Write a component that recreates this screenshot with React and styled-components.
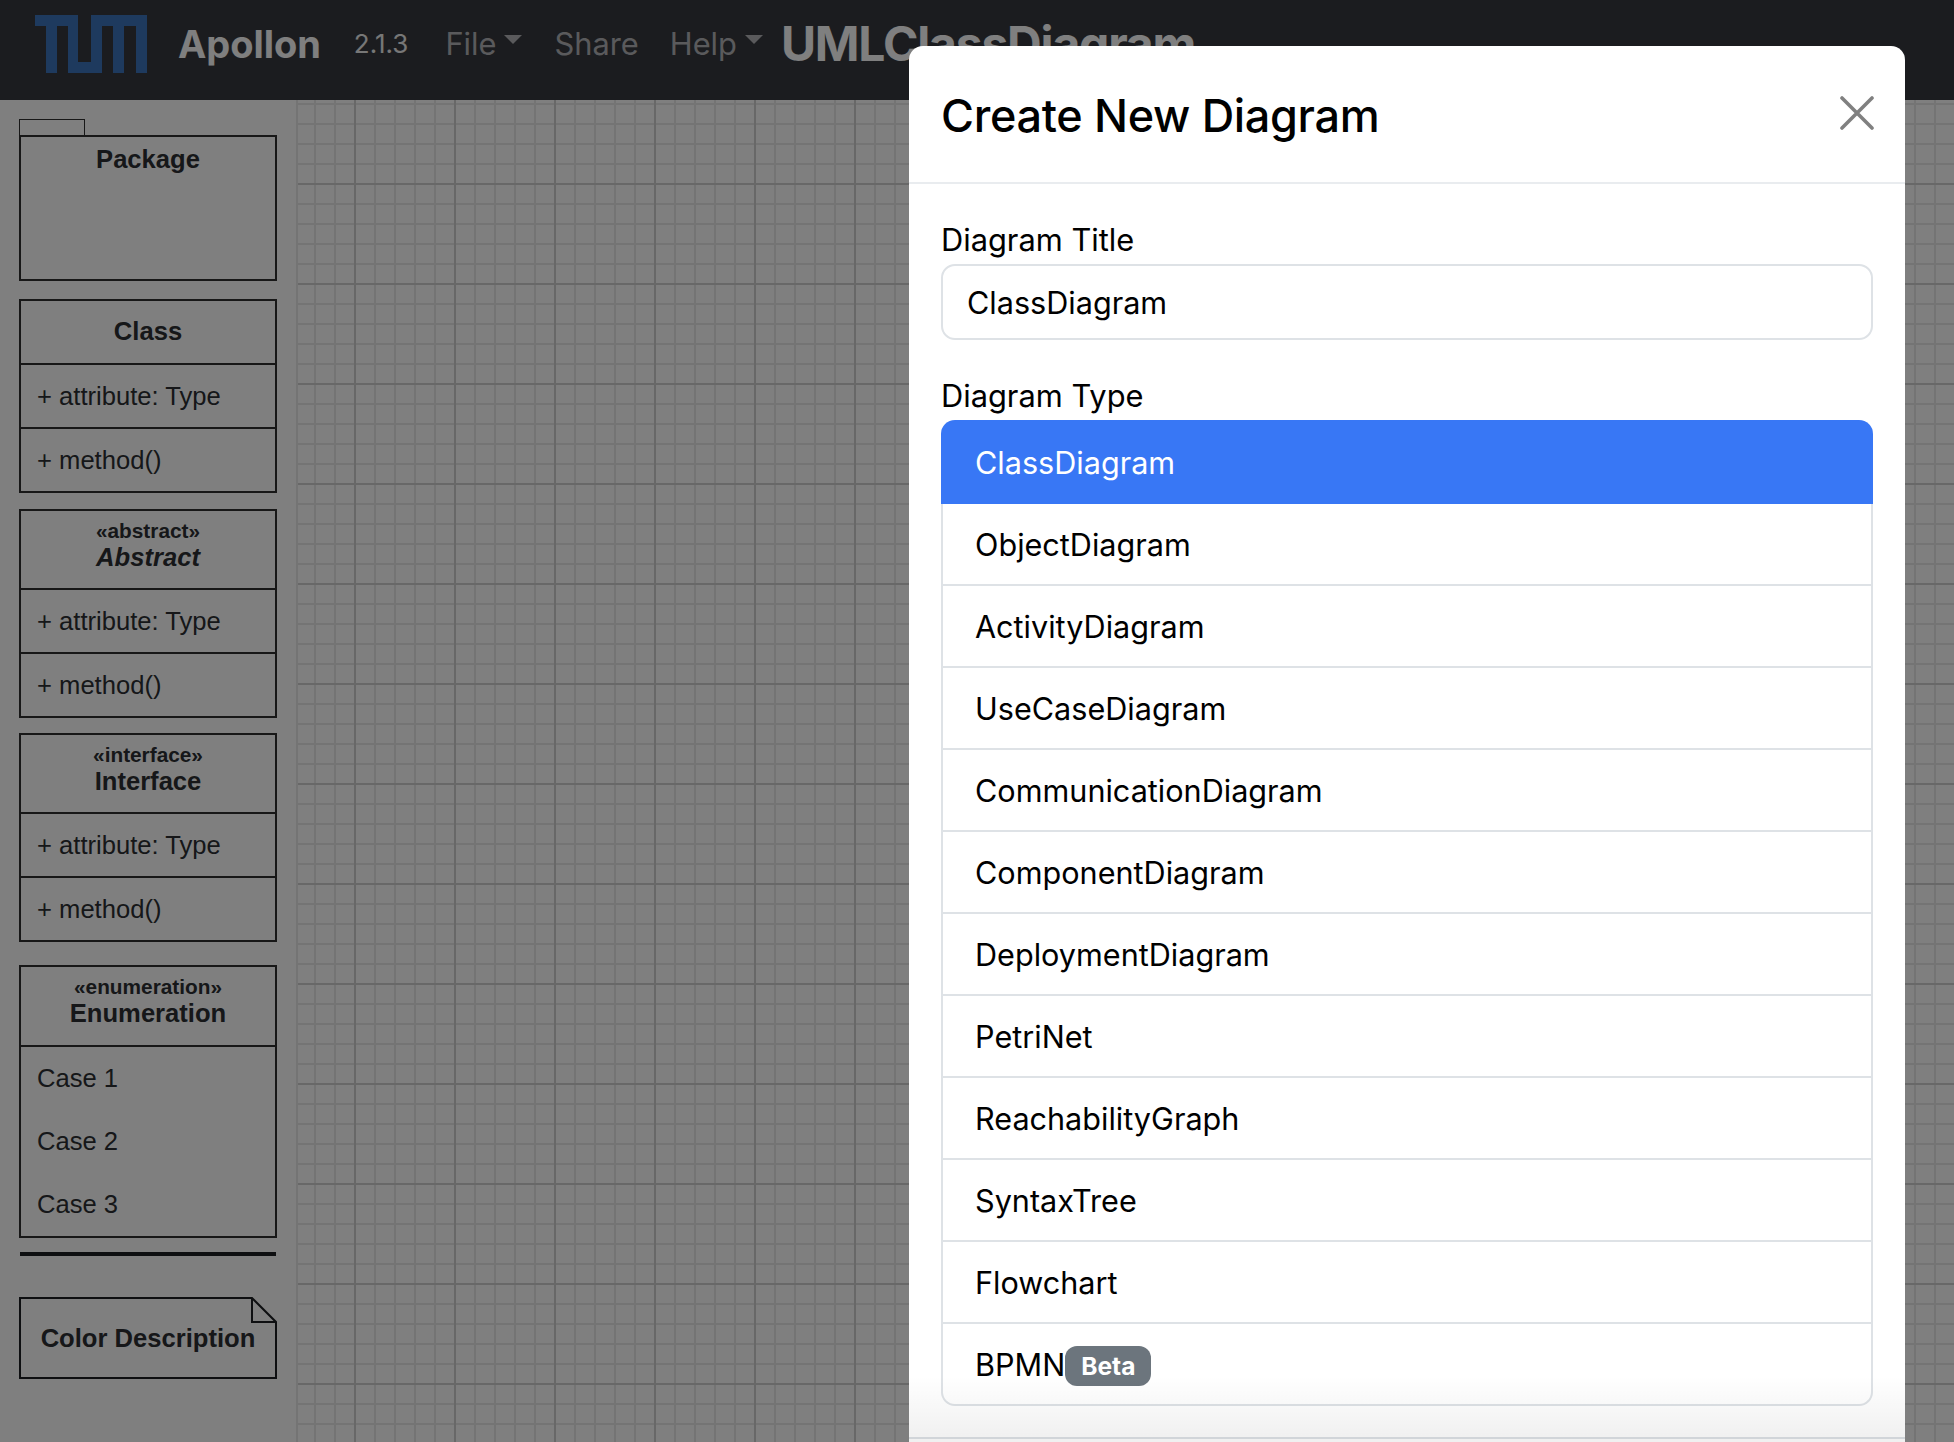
import React from 'react'
import styled, { createGlobalStyle } from 'styled-components'

const GlobalStyle = createGlobalStyle`
  * { box-sizing: border-box; }
  html, body { margin: 0; padding: 0; background: #fff; }
  body { font-family: Inter, "Liberation Sans", sans-serif; overflow: hidden; }
`

const Page = styled.div`
  position: relative;
  width: 1954px;
  height: 1442px;
  overflow: hidden;
  background: #fff;
`

const Navbar = styled.nav`
  height: 100px;
  background: #36393f;
  display: flex;
  align-items: center;
  padding: 0 0 13px 35px;
  white-space: nowrap;
`

const Logo = styled.svg`
  width: 112px;
  height: 58px;
  margin-bottom: -1px;
  flex: none;
`

const Brand = styled.span`
  margin-left: 31px;
  font-size: 38px;
  font-weight: 700;
  letter-spacing: -0.05px;
  color: #fff;
`

const Version = styled.span`
  margin-left: 33px;
  font-size: 26px;
  color: #eee;
`

const NavLink = styled.span`
  margin-left: ${p => p.$ml}px;
  font-size: 30.8px;
  color: #b4b5b8;
  display: inline-flex;
  align-items: center;
`

const Caret = styled.i`
  display: inline-block;
  margin-left: 8px;
  margin-top: -8px;
  border-top: 9px solid #b4b5b8;
  border-left: 9px solid transparent;
  border-right: 9px solid transparent;
`

const DiagramName = styled.span`
  margin-left: 18px;
  font-size: 48px;
  font-weight: 700;
  letter-spacing: -1.2px;
  color: #fff;
`

const Workspace = styled.div`
  display: flex;
  height: 1342px;
`

const Sidebar = styled.aside`
  width: 296px;
  flex: none;
  padding: 19px 0 0 19px;
  display: flex;
  flex-direction: column;
  font-family: "Liberation Sans", Arial, sans-serif;
  color: #2c2f33;
`

const Canvas = styled.main`
  flex: 1;
  border-left: 2px solid #e8e8e8;
  background-image:
    linear-gradient(to right, #d0d0d0 2px, transparent 2px),
    linear-gradient(to bottom, #d0d0d0 2px, transparent 2px),
    linear-gradient(to right, #e8e8e8 2px, transparent 2px),
    linear-gradient(to bottom, #e8e8e8 2px, transparent 2px);
  background-size: 100px 100%, 100% 100px, 20px 100%, 100% 20px;
  background-position: 56px 2px, 0 83px, 16px 2px, 0 3px;
  background-repeat: repeat;
`

const PackageTab = styled.div`
  width: 66px;
  height: 16px;
  border: 1.5px solid #2e2e2e;
  border-bottom: 0;
`

const PackageBody = styled.div`
  width: 258px;
  height: 146px;
  border: 2px solid #2e2e2e;
  padding-top: 6px;
  text-align: center;
  font-size: 25.6px;
  font-weight: 700;
  line-height: 32px;
`

const UmlBox = styled.section`
  width: 258px;
  margin-top: ${p => p.$mt}px;
  border: 2px solid #2e2e2e;
  display: flex;
  flex-direction: column;
`

const UmlHead = styled.header`
  height: ${p => p.$h}px;
  flex: none;
  display: flex;
  flex-direction: column;
  align-items: center;
  justify-content: ${p => (p.$stereo ? 'flex-start' : 'center')};
  padding: ${p => (p.$stereo ? '7px 0 0' : '0 0 3px')};
  border-bottom: 2px solid #2e2e2e;
`

const Stereotype = styled.span`
  font-size: 20.8px;
  font-weight: 700;
  line-height: 26px;
`

const UmlName = styled.span`
  font-size: 25.6px;
  font-weight: 700;
  font-style: ${p => (p.$italic ? 'italic' : 'normal')};
  line-height: 26px;
`

const UmlRow = styled.div`
  height: ${p => p.$h || 62}px;
  flex: none;
  display: flex;
  align-items: center;
  padding-left: 16px;
  font-size: 25.6px;
  border-bottom: ${p => (p.$divider ? '2px solid #2e2e2e' : '0')};
`

const Separator = styled.hr`
  width: 256px;
  height: 4px;
  margin: 14px 0 0 1px;
  border: 0;
  background: #1c1e22;
`

const NoteBox = styled.div`
  position: relative;
  width: 258px;
  height: 82px;
  margin-top: 41px;
  display: flex;
  align-items: center;
  justify-content: center;
  font-size: 25.6px;
  font-weight: 700;
`

const NoteOutline = styled.svg`
  position: absolute;
  inset: 0;
  width: 100%;
  height: 100%;
`

const NoteLabel = styled.span`
  position: relative;
`

const Backdrop = styled.div`
  position: absolute;
  inset: 0;
  background: rgba(0, 0, 0, 0.5);
  padding: 46px 0 0 909px;
`

const Modal = styled.div`
  position: relative;
  width: 996px;
  height: 1420px;
  background: #fff;
  border-radius: 14px 14px 0 0;
  color: #000;
  display: flex;
  flex-direction: column;

  &::after {
    content: '';
    position: absolute;
    left: 0;
    right: 0;
    top: 1330px;
    height: 90px;
    background: linear-gradient(to bottom, rgba(0, 0, 0, 0), rgba(0, 0, 0, 0.06) 70%);
    pointer-events: none;
  }
`

const ModalHeader = styled.div`
  height: 138px;
  flex: none;
  display: flex;
  align-items: center;
  justify-content: space-between;
  padding: 0 32px;
  border-bottom: 2px solid #e9ecef;
`

const ModalTitle = styled.h5`
  margin: 3px 0 0;
  font-size: 45px;
  font-weight: 550;
  letter-spacing: -0.33px;
  line-height: 1.2;
`

const CloseIcon = styled.svg`
  width: 34px;
  height: 34px;
  margin: 0 -1px 2px 0;
`

const ModalBody = styled.div`
  padding: 36px 32px 0;
  flex: none;
`

const FieldLabel = styled.label`
  display: block;
  height: 44px;
  font-size: 30.8px;
  line-height: 40px;
  margin-top: ${p => p.$mt || 0}px;
`

const TitleInput = styled.div`
  height: 76px;
  border: 2px solid #dee2e6;
  border-radius: 14px;
  display: flex;
  align-items: center;
  padding-left: 24px;
  font-size: 30.6px;
`

const TypeList = styled.ul`
  list-style: none;
  margin: 0;
  padding: 0;
  border-radius: 14px;
`

const TypeItem = styled.li`
  height: ${p => (p.$active ? 84 : 82)}px;
  display: flex;
  align-items: center;
  padding-left: ${p => (p.$active ? 34 : 32)}px;
  font-size: 30.6px;
  background: ${p => (p.$active ? '#3877f5' : '#fff')};
  color: ${p => (p.$active ? '#fff' : '#000')};
  border-style: solid;
  border-color: #dee2e6;
  border-width: ${p => (p.$active ? '0' : '0 2px 2px')};
  border-radius: ${p => (p.$active ? '14px 14px 0 0' : p.$last ? '0 0 14px 14px' : '0')};
`

const Badge = styled.span`
  margin: 4px 0 0 0;
  height: 40px;
  padding: 0 16px;
  border-radius: 12px;
  background: #6c757d;
  color: #fff;
  font-size: 24.5px;
  font-weight: 700;
  display: inline-flex;
  align-items: center;
`

const ModalFooter = styled.div`
  margin-top: 31px;
  border-top: 2px solid #dee2e6;
`

const diagramTypes = [
  'ObjectDiagram', 'ActivityDiagram', 'UseCaseDiagram', 'CommunicationDiagram',
  'ComponentDiagram', 'DeploymentDiagram', 'PetriNet', 'ReachabilityGraph',
  'SyntaxTree', 'Flowchart',
]

function ClassElement({ mt, head, headHeight, stereotype, italic }) {
  return (
    <UmlBox $mt={mt}>
      <UmlHead $h={headHeight} $stereo={!!stereotype}>
        {stereotype && <Stereotype>{stereotype}</Stereotype>}
        <UmlName $italic={italic}>{head}</UmlName>
      </UmlHead>
      <UmlRow $h={64} $divider>+ attribute: Type</UmlRow>
      <UmlRow>+ method()</UmlRow>
    </UmlBox>
  )
}

export default function App() {
  return (
    <Page>
      <GlobalStyle />
      <Navbar>
        <Logo viewBox="0 0 112 58">
          <path fill="#3c74bd" d="M0 0H43V47H56V0H112V58H101V11H89V58H78V11H67V58H33V11H22V58H11V11H0Z" />
        </Logo>
        <Brand>Apollon</Brand>
        <Version>2.1.3</Version>
        <NavLink $ml={37}>File<Caret /></NavLink>
        <NavLink $ml={32}>Share</NavLink>
        <NavLink $ml={31}>Help<Caret /></NavLink>
        <DiagramName>UMLClassDiagram</DiagramName>
      </Navbar>
      <Workspace>
        <Sidebar>
          <PackageTab />
          <PackageBody>Package</PackageBody>
          <ClassElement mt={18} head="Class" headHeight={64} />
          <ClassElement mt={16} head="Abstract" headHeight={79} stereotype="«abstract»" italic />
          <ClassElement mt={15} head="Interface" headHeight={79} stereotype="«interface»" />
          <UmlBox $mt={23}>
            <UmlHead $h={80} $stereo>
              <Stereotype>«enumeration»</Stereotype>
              <UmlName>Enumeration</UmlName>
            </UmlHead>
            <UmlRow $h={63}>Case 1</UmlRow>
            <UmlRow $h={63}>Case 2</UmlRow>
            <UmlRow $h={63}>Case 3</UmlRow>
          </UmlBox>
          <Separator />
          <NoteBox>
            <NoteOutline viewBox="0 0 258 82">
              <path
                fill="none"
                stroke="#1c1e22"
                strokeWidth="2"
                d="M1 1H233L257 25V81H1ZM233 1V25H257"
              />
            </NoteOutline>
            <NoteLabel>Color Description</NoteLabel>
          </NoteBox>
        </Sidebar>
        <Canvas />
      </Workspace>
      <Backdrop>
        <Modal>
          <ModalHeader>
            <ModalTitle>Create New Diagram</ModalTitle>
            <CloseIcon viewBox="0 0 34 34">
              <path stroke="#808080" strokeWidth="3.6" strokeLinecap="round" d="M2 2L32 32M32 2L2 32" />
            </CloseIcon>
          </ModalHeader>
          <ModalBody>
            <FieldLabel>Diagram Title</FieldLabel>
            <TitleInput>ClassDiagram</TitleInput>
            <FieldLabel $mt={36}>Diagram Type</FieldLabel>
            <TypeList>
              <TypeItem $active>ClassDiagram</TypeItem>
              {diagramTypes.map(name => (
                <TypeItem key={name}>{name}</TypeItem>
              ))}
              <TypeItem $last>BPMN<Badge>Beta</Badge></TypeItem>
            </TypeList>
          </ModalBody>
          <ModalFooter />
        </Modal>
      </Backdrop>
    </Page>
  )
}
